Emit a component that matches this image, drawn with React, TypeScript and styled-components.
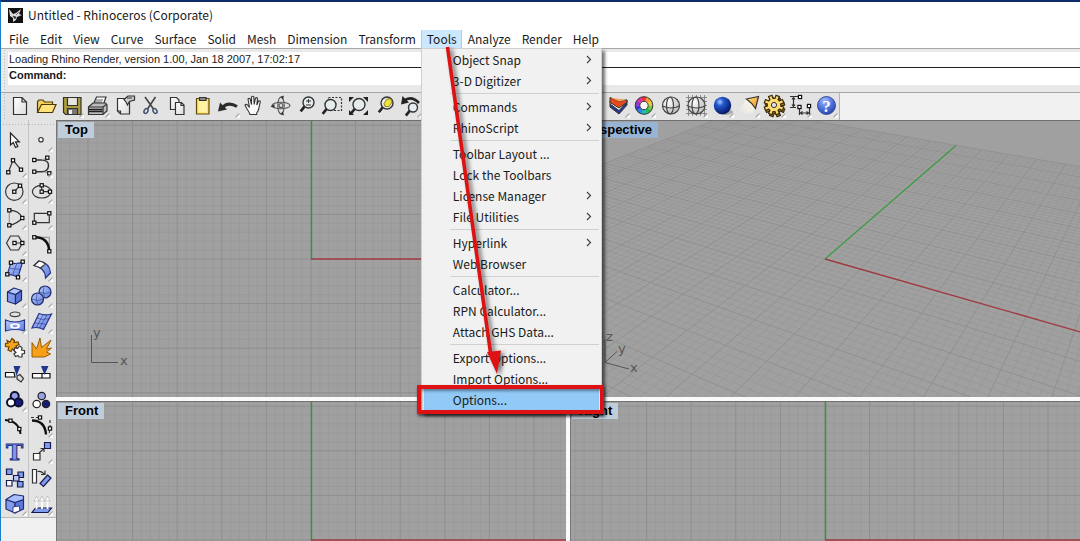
import React from "react";
import styled, { createGlobalStyle, css } from "styled-components";

const UI_FONT = '"Noto Sans CJK SC", "Noto Sans", sans-serif';
const CLASSIC_FONT = '"Liberation Sans", Arial, sans-serif';

const GlobalStyle = createGlobalStyle`
  *, *::before, *::after { box-sizing: border-box; }
  body { margin: 0; background: #f0f0f0; overflow: hidden; }
  button, input { font: inherit; color: inherit; }
`;

/* ---------- window frame ---------- */

const Window = styled.div`
  height: 100vh;
  display: flex;
  flex-direction: column;
  overflow: hidden;
  background: #f0f0f0;
  border-top: 2px solid #0c2c6c;
  border-left: 1px solid #1a80cc;
  color: #1a1a1a;
  font: 12px/18px ${UI_FONT};
`;

const TitleBar = styled.header`
  flex: none;
  display: flex;
  align-items: center;
  gap: 5px;
  height: 28px;
  padding: 0 0 2px 7px;
  background: #fff;
`;

const Title = styled.h1`
  margin: 0;
  font-size: 12px;
  font-weight: 400;
`;

const MenuBar = styled.nav`
  flex: none;
  display: flex;
  height: 18px;
  padding-left: 2px;
  background: #fff;
`;

const MenuSlot = styled.div`
  position: relative;
  display: flex;
`;

const MenuButton = styled.button<{ $open?: boolean }>`
  height: 18px;
  padding: 0 4px 0 5px;
  border: 1px solid transparent;
  border-width: 0 1px;
  background: none;
  line-height: 16px;
  ${(p) =>
    p.$open &&
    css`
      background: #cce8ff;
      border-color: #99d1ff;
    `}
`;

const DropDown = styled.div`
  position: absolute;
  z-index: 5;
  top: 18px;
  left: 0;
  width: 181px;
  padding: 0 2px 2px;
  background: #f1f1f1;
  border: 1px solid #cfcfcf;
  box-shadow: 3px 3px 3px rgba(0, 0, 0, 0.55);
`;

const DropItem = styled.button<{ $active?: boolean }>`
  display: flex;
  align-items: center;
  justify-content: space-between;
  width: 100%;
  height: 21px;
  padding: 0 7px 0 29px;
  border: 0;
  background: ${(p) => (p.$active ? "#91c9f7" : "none")};
  text-align: left;
  line-height: 20px;
  white-space: nowrap;
`;

const DropRule = styled.hr`
  height: 1px;
  margin: 2px 0 2px 26px;
  border: 0;
  background: #d0d0d0;
`;

const Highlight = styled.div`
  position: absolute;
  right: -3px;
  bottom: -2px;
  left: -5px;
  height: 29px;
  border: 4px solid #de1212;
  box-shadow: 1px 2px 3px rgba(0, 0, 0, 0.6), inset 1px 2px 3px rgba(0, 0, 0, 0.4);
  pointer-events: none;
`;

const Pointer = styled.svg`
  position: absolute;
  top: -5px;
  left: 15px;
  pointer-events: none;
  filter: drop-shadow(3px 2px 2px rgba(0, 0, 0, 0.55));
`;

/* ---------- command area ---------- */

const CommandArea = styled.section`
  flex: none;
  padding: 3px 0 7px 7px;
  border-top: 1px solid #a8a8a8;
  border-bottom: 1px solid #a5a5a5;
  background: radial-gradient(circle, #bdbdbd 1px, transparent 1px) 2px 0 / 3px 3px repeat-y, #e9e9e9;
  font-family: ${CLASSIC_FONT};
  font-size: 11px;
`;

const History = styled.output`
  display: block;
  height: 16px;
  padding-left: 1px;
  border-bottom: 1px solid #222;
  background: #fff;
  line-height: 15px;
`;

const Prompt = styled.div`
  display: flex;
  height: 17px;
  padding-left: 1px;
  background: #fff;
  line-height: 15px;

  label { font-weight: 700; }
  input { flex: 1; min-width: 0; padding: 0 4px; border: 0; outline: 0; background: none; }
`;

/* ---------- toolbars ---------- */

const MainTools = styled.div`
  flex: none;
  align-self: flex-start;
  display: flex;
  height: 27px;
  padding: 0 0 1px 6px;
  border-right: 1px solid #b4b4b4;
  background: radial-gradient(circle, #bdbdbd 1px, transparent 1px) 2px 0 / 3px 3px repeat-y, #e3e3e3;
`;

const Covered = styled.div`
  width: 182px;
`;

const ToolButton = styled.button`
  flex: none;
  display: block;
  width: 26px;
  height: 26px;
  padding: 0;
  border: 0;
  background: none;

  svg { display: block; }
`;

const Body = styled.main`
  flex: 1;
  display: flex;
  min-height: 0;
`;

const SideBars = styled.aside`
  flex: none;
  align-self: flex-start;
  display: flex;
  padding: 0 2px 0 1px;
  border-bottom: 1px solid #bababa;
  background: #e3e3e3;
`;

const SideColumn = styled.div`
  padding-top: 7px;
  background: radial-gradient(circle, #b5b5b5 1px, transparent 1px) 0 3px / 3px 3px repeat-x;

  & + & { box-shadow: inset 1px 0 #c4c4c4; }
`;

/* ---------- viewports ---------- */

const Viewports = styled.div`
  flex: 1;
  min-width: 0;
  display: grid;
  grid-template-columns: 1fr 1fr;
  grid-auto-rows: 277px;
  gap: 4px;
  background: #fafafa;
`;

const ViewFrame = styled.section`
  position: relative;
  overflow: hidden;
  border-top: 1px solid #6f6f6f;
  border-left: 1px solid #777;
  background: #a0a0a0;
`;

const Scene = styled.svg`
  display: block;
  width: 100%;
  height: 100%;
`;

const ViewLabel = styled.h2<{ $active?: boolean }>`
  position: absolute;
  top: 1px;
  left: 1px;
  margin: 0;
  padding: 0 6px 0 7px;
  background: ${(p) => (p.$active ? "#98b4d4" : "#bfccda")};
  color: #000;
  font: 700 13px/16px ${CLASSIC_FONT};
`;

const AxisMark = styled.svg`
  position: absolute;
  bottom: 24px;
  left: 32px;
  font: 13px "DejaVu Sans", sans-serif;
`;

/* ---------- icon drawing ---------- */

const INK = "#333";
const BLUE = "#7f9bea";

const More = () => (
  <g>
    <path d="M25 20v5h-5z" fill="#fff" />
    <path d="M20.500 24.500l4-4" stroke="#aaa" />
  </g>
);

const Icon = ({ more, children }: { more?: boolean; children: React.ReactNode }) => (
  <svg width="26" height="26" viewBox="0 0 26 26" fill="none" stroke={INK} strokeWidth="1.2" aria-hidden="true">
    {children}
    {more && <g stroke="none"><More /></g>}
  </svg>
);

const Nodes = ({ at }: { at: number[][] }) => (
  <g fill="#fff" stroke="#111" strokeWidth="1.2">
    {at.map(([x, y]) => (
      <rect key={`${x}-${y}`} x={x - 1.6} y={y - 1.6} width="3.200" height="3.200" />
    ))}
  </g>
);

const Lens = ({ x, y, r, fill = "#e6ebee" }: { x: number; y: number; r: number; fill?: string }) => (
  <g>
    <path d={`M${x - r * 0.7} ${y + r * 0.7}l-4 5`} stroke="#222" strokeWidth="2.6" />
    <circle cx={x} cy={y} r={r} fill={fill} stroke="#333" strokeWidth="1.4" />
  </g>
);

const GlobeLines = ({ x }: { x: number }) => (
  <g stroke="#444" strokeWidth="1.2">
    <circle cx={x} cy="12.500" r="8.500" fill="url(#pearl)" />
    <ellipse cx={x - 1} cy="12.500" rx="3.500" ry="8.500" />
    <path d={`M${x - 8.5} 13q8.500 4 17 0`} />
  </g>
);

const GearTeeth = ({ x, y, r, n, fill }: { x: number; y: number; r: number; n: number; fill: string }) => {
  const pts: string[] = [];
  for (let i = 0; i < n; i++) {
    const step = (Math.PI * 2) / n;
    [[-0.3, 0.68], [-0.24, 1], [0.24, 1], [0.3, 0.68]].forEach(([a, k]) => {
      const t = (i + 0.5 + a) * step;
      pts.push(`${(x + Math.cos(t) * r * k).toFixed(1)},${(y + Math.sin(t) * r * k).toFixed(1)}`);
    });
  }
  return <polygon points={pts.join(" ")} fill={fill} stroke="#3a2c0c" strokeWidth="1.2" strokeLinejoin="round" />;
};

const Defs = () => (
  <svg width="0" height="0" style={{ position: "absolute" }} aria-hidden="true">
    <defs>
      <radialGradient id="pearl" cx=".35" cy=".3" r=".8">
        <stop offset="0" stopColor="#fff" />
        <stop offset="1" stopColor="#b5b5b5" />
      </radialGradient>
      <radialGradient id="ball" cx=".35" cy=".3" r=".75">
        <stop offset="0" stopColor="#a9cbff" />
        <stop offset=".3" stopColor="#2459cf" />
        <stop offset="1" stopColor="#02145e" />
      </radialGradient>
      <radialGradient id="help" cx=".4" cy=".25" r=".8">
        <stop offset="0" stopColor="#a3baff" />
        <stop offset=".6" stopColor="#476ad8" />
        <stop offset="1" stopColor="#2a3f9c" />
      </radialGradient>
      <linearGradient id="sky" x1="0" y1="0" x2="1" y2="1">
        <stop offset="0" stopColor="#b9cbff" />
        <stop offset="1" stopColor="#5f7ddb" />
      </linearGradient>
      <linearGradient id="paper" x1="0" y1="0" x2="1" y2="1">
        <stop offset="0" stopColor="#fff" />
        <stop offset="1" stopColor="#ddd" />
      </linearGradient>
      <linearGradient id="glow" x1="0" y1="1" x2="1" y2="0">
        <stop offset="0" stopColor="#fff" stopOpacity="0" />
        <stop offset="1" stopColor="#fff7d8" />
      </linearGradient>
      <linearGradient id="amber" x1="0" y1="0" x2="1" y2="1">
        <stop offset="0" stopColor="#ffe68a" />
        <stop offset="1" stopColor="#f28a12" />
      </linearGradient>
    </defs>
  </svg>
);

type Tool = { name: string; more?: boolean; art: React.ReactNode };

const wheel = ["#e33", "#f93", "#ec3", "#7c3", "#2b5", "#2bb", "#28d", "#43d", "#93c", "#d3a"];

const fileTools: Tool[] = [
  { name: "New", art: <path d="M6.500 4.500h8.500l4.500 4.500v12.500h-13zM15 4.500v4.500h4.500" fill="url(#paper)" /> },
  {
    name: "Open",
    art: (
      <g stroke="#4a3a08">
        <path d="M4.500 19.500v-11l1.500-1.500h4l1.500 2h8v3" fill="#f4cf5c" />
        <path d="M4.500 19.500l4-8h14.500l-3.500 8z" fill="#ffe27a" />
      </g>
    ),
  },
  {
    name: "Save",
    more: true,
    art: (
      <g>
        <path d="M4.500 4.500h17.500v17h-15.500l-2-2z" fill="#a99c3e" />
        <path d="M8.500 4.500h10v8h-10z" fill="#e6e6e0" />
        <path d="M8.500 15.500h10v6h-10z" fill="#777" />
        <path d="M10 17h3v4h-3z" fill="#eee" stroke="none" />
      </g>
    ),
  },
  {
    name: "Print",
    more: true,
    art: (
      <g>
        <path d="M8.500 11l3-7h9.500l-2.500 7z" fill="#fff" />
        <path d="M11 7h7M10 9h7" strokeWidth=".8" />
        <path d="M3.500 14l4.500-4h12.500l1.500 2v6l-4 3.500h-14.500z" fill="#bcbcbc" />
        <path d="M3.500 14h14.500l4-3M18 14v7" />
        <path d="M4 16.500h13.500M4 18.500h13.500" strokeWidth="1.400" stroke="#222" />
      </g>
    ),
  },
  {
    name: "Document properties",
    art: (
      <g>
        <path d="M6.500 5.500h12v15.500h-9l-3-3z" fill="url(#paper)" />
        <path d="M6.500 18h3v3" />
        <path d="M13 6.500l4-3.500h6.500v4l-5 1.500-2 3.500-1.500-3z" fill="#cfcfcf" />
        <path d="M16 5h5" strokeWidth="1" />
      </g>
    ),
  },
  {
    name: "Cut",
    art: (
      <g>
        <path d="M8 4l8.500 12M18.500 4l-8 12" stroke="#444" strokeWidth="1.600" />
        <ellipse cx="9" cy="18" rx="1.800" ry="2.600" stroke="#3a4a70" strokeWidth="1.400" transform="rotate(30 9 18)" />
        <ellipse cx="18" cy="18" rx="1.800" ry="2.600" stroke="#3a4a70" strokeWidth="1.400" transform="rotate(-30 18 18)" />
      </g>
    ),
  },
  {
    name: "Copy",
    art: (
      <g fill="url(#paper)">
        <path d="M7.500 4.500h6l2.500 2.500v9.500h-8.500z" />
        <path d="M12.500 9.500h6l2.500 2.500v9.500h-8.500zM18 9.500v3h3" />
      </g>
    ),
  },
  {
    name: "Paste",
    art: (
      <g>
        <path d="M7.500 5.500h12.500v15.500h-12.500z" fill="#ffe05a" stroke="#5c4c10" />
        <path d="M9.500 7.500h8.500v12h-8.500z" fill="#fff2a6" stroke="none" />
        <path d="M10.500 4.500h6.500v3h-6.500z" fill="#888" />
      </g>
    ),
  },
  {
    name: "Undo",
    more: true,
    art: (
      <g>
        <path d="M7 15q6-7 15-1.500" strokeWidth="3" stroke="#2b2b2b" />
        <path d="M3 18.500l2-9 7 7z" fill="#2b2b2b" stroke="none" />
      </g>
    ),
  },
  {
    name: "Pan",
    art: (
      <path
        d="M9 21.500q-1-3-3-5.500l-2-4q1-1.500 2.500 0l2 2.500-1.500-8.500q1.200-1.500 2.200 0l1.300 5.500v-7.500q1.200-1.500 2.300 0l.4 7.500 1.300-6.500q1.500-1 2 .5l-.7 6.500 1.700-4q1.500-.7 1.800.6l-1.600 7.400q-.5 2-2 4v1.500z"
        fill="#fafafa"
        strokeWidth="1.100"
      />
    ),
  },
  {
    name: "Rotate view",
    art: (
      <g strokeWidth="1.100" stroke="#555">
        <ellipse cx="14" cy="12.500" rx="9" ry="3.200" />
        <ellipse cx="14" cy="12.500" rx="3.200" ry="8.500" />
        <circle cx="14" cy="12.500" r="2" fill="#ddd" />
        <path d="M17 2.500l-4 1.500 3 2.500zM17 22.500l-4-1.500 3-2.500zM3.500 13.500l4-2.500v4z" fill="#333" stroke="none" />
      </g>
    ),
  },
  {
    name: "Zoom dynamic",
    art: (
      <g>
        <Lens x={15.5} y={9.5} r={5.5} />
        <path d="M13 8h5M15.500 6v4M13 12h5" strokeWidth="1" />
      </g>
    ),
  },
  {
    name: "Zoom window",
    art: (
      <g>
        <path d="M9.500 4.500h13v13h-13z" strokeDasharray="2 1.500" />
        <Lens x={11.5} y={12} r={5.5} />
      </g>
    ),
  },
  {
    name: "Zoom extents",
    art: (
      <g>
        <Lens x={14} y={11.5} r={6} />
        <path d="M4 4h5l-5 5zM23 4h-5l5 5zM23 22h-5l5-5zM4 22h5l-5-5z" fill="#222" stroke="none" />
      </g>
    ),
  },
  {
    name: "Zoom selected",
    art: (
      <g>
        <Lens x={16} y={10} r={6} />
        <path d="M13 10.500l3-4.500h4l1 3-3 4.500h-4z" fill="#f4e23c" stroke="#867a14" strokeWidth=".9" />
      </g>
    ),
  },
  {
    name: "Undo view",
    more: true,
    art: (
      <g>
        <path d="M7 8q7-6 15 2" strokeWidth="2.600" stroke="#222" />
        <path d="M4 11.500l1.500-8.500 6.500 6.500z" fill="#222" stroke="none" />
        <Lens x={16} y={14.5} r={4.5} />
      </g>
    ),
  },
];

const renderTools: Tool[] = [
  {
    name: "Layers",
    more: true,
    art: (
      <g strokeWidth="1">
        <path d="M5 14l9 7 8-9v-3l-17 2z" fill="#27378f" />
        <path d="M5 11l9 6.500 8-8.500v-2l-17 1z" fill="#fff" />
        <path d="M5 4.500l9 4 8-1.500v2l-8 6-9-5.500z" fill="#e8481c" />
        <path d="M5 4.500l9 4 8-1.500-7-1z" fill="#ffa04c" stroke="none" />
      </g>
    ),
  },
  {
    name: "Object colour",
    more: true,
    art: (
      <g>
        {wheel.map((c, i) => (
          <circle key={c} cx="13" cy="12.500" r="6.500" stroke={c} strokeWidth="4.600" pathLength="10" strokeDasharray="1.050 8.950" strokeDashoffset={-i - 7} />
        ))}
        <circle cx="13" cy="12.500" r="8.800" strokeWidth="1" />
        <circle cx="13" cy="12.500" r="4.200" strokeWidth="1" fill="#f5f5f5" />
      </g>
    ),
  },
  { name: "Wireframe", art: <GlobeLines x={14} /> },
  {
    name: "Shaded grid",
    more: true,
    art: (
      <g>
        <path d="M5.500 2v21M9.500 2v21M13.500 2v21M17.500 2v21M21.500 2v21M3 4.500h21M3 8.500h21M3 12.500h21M3 16.500h21M3 20.500h21" strokeWidth=".8" stroke="#777" />
        <GlobeLines x={13.5} />
      </g>
    ),
  },
  {
    name: "Render",
    more: true,
    art: (
      <g stroke="none">
        <ellipse cx="16" cy="19" rx="8" ry="3" fill="#aaa" />
        <circle cx="13.500" cy="12.500" r="8.700" fill="url(#ball)" />
      </g>
    ),
  },
  {
    name: "Spotlight",
    more: true,
    art: (
      <g>
        <path d="M12 5l-8 12q6 6 13 3l3-6z" fill="url(#glow)" stroke="none" />
        <path d="M11.500 6l12-2.500-3 12q-4-6-9-9.500z" fill="url(#amber)" />
      </g>
    ),
  },
  {
    name: "Options",
    more: true,
    art: (
      <g>
        <GearTeeth x={14} y={14} r={10} n={8} fill="#a5801c" />
        <GearTeeth x={13} y={12} r={10} n={8} fill="#ffdc70" />
        <circle cx="13" cy="12" r="2.600" fill="#e3e3e3" strokeWidth="1" />
      </g>
    ),
  },
  {
    name: "Dimensions",
    more: true,
    art: (
      <g strokeWidth="1.200">
        <path d="M3 3.500h11M3 14.500h6M6.500 5v8M5 6.500l1.500-2 1.500 2M5 11.500l1.500 2 1.500-2M12.500 14v8M22.500 13v9M14 20h7M15.500 18.500l-2 1.500 2 1.500M19.500 18.500l2 1.500-2 1.500" />
        <Nodes at={[[13, 4], [12.5, 14], [22, 13]]} />
      </g>
    ),
  },
  {
    name: "Help",
    more: true,
    art: (
      <g>
        <circle cx="13.500" cy="12.500" r="9" fill="url(#help)" stroke="#3a4f9e" strokeWidth="1" />
        <text x="13.500" y="18.500" textAnchor="middle" fill="#fff" stroke="none" fontFamily="Liberation Serif, serif" fontSize="17" fontWeight="700">?</text>
      </g>
    ),
  },
];

const leftTools: Tool[] = [
  { name: "Select", art: <path d="M8.500 6v12l2.800-2.500 2.200 5 2.300-1-2.300-4.700h3.800z" fill="#fff" stroke="#222" /> },
  { name: "Polyline", more: true, art: <g><path d="M6.300 19.300L11 7.300l8 9.400" /><Nodes at={[[6.3, 19.3], [11, 7.3], [19, 16.7]]} /></g> },
  { name: "Circle", more: true, art: <g><circle cx="12.300" cy="12.700" r="8.700" /><path d="M12.300 12.700l5.700-6" /><Nodes at={[[12.3, 12.7], [18, 6.7]]} /></g> },
  { name: "Arc", more: true, art: <g><path d="M7.300 5.300Q17 5 20.300 13Q15 19 7.300 20.300" /><path d="M7.300 5.300v15" stroke="#999" /><Nodes at={[[7.3, 5.3], [20.3, 13], [7.3, 20.3]]} /></g> },
  { name: "Polygon", more: true, art: <g><path d="M4.500 12l4-7h8l4 7-4 7h-8zM12.500 12h8" /><Nodes at={[[12.5, 12], [20.3, 12]]} /></g> },
  {
    name: "Surface",
    more: true,
    art: (
      <g>
        <path d="M9 5.700q6 2 11.700-1l-4.700 15.600q-5-3-10.700-3z" fill="url(#sky)" stroke="#26348a" />
        <path d="M15 6l-4.500 12M7 11.500q6 0 11.500 1" stroke="#4659a8" strokeWidth=".9" />
        <Nodes at={[[9, 5.7], [20.7, 4.7], [16, 20.3], [5.3, 17.3]]} />
      </g>
    ),
  },
  {
    name: "Box",
    more: true,
    art: (
      <g stroke="#1f2c6e" strokeLinejoin="round">
        <path d="M5.500 9l8 2.500v9.500l-8-2.500z" fill={BLUE} />
        <path d="M13.500 11.500l6-4v9.500l-6 4z" fill="#5a74d4" />
        <path d="M5.500 9l6.500-4 7.500 2.500-6 4z" fill="#b6c7ff" />
      </g>
    ),
  },
  {
    name: "Project",
    more: true,
    art: (
      <g>
        <ellipse cx="13" cy="5.300" rx="5" ry="2.300" stroke="#444" />
        <path d="M3.500 11q9.500 4 19 0v11q-9.500-3-19 0z" fill="url(#sky)" stroke="#26348a" />
        <ellipse cx="13" cy="17" rx="5" ry="2.800" fill="#fff" stroke="none" />
        <ellipse cx="13" cy="17" rx="2.500" ry="1.200" fill={BLUE} stroke="none" />
      </g>
    ),
  },
  {
    name: "Join",
    art: (
      <g>
        <path d="M5 5.500l3 1.500 2-3.500 2.500 2-.5 2 4-.5 1 2.500-3 1.500 1.500 3-3 1.500-2-1.500-1.500 2.500-3-1.500 1-3-3.500-.5 0-3 2.500-.5z" fill="#f9a51a" stroke="#6b4300" />
        <path d="M13 12.500l2.500 1 2-2.500 2.500 1.500-.5 2.500 3 .5 0 3-2.500.5 0 3-3 0-1-1.500-2.500 1-1.500-2.500 2-1.500-2-2z" fill="#fff" />
      </g>
    ),
  },
  {
    name: "Trim",
    art: (
      <g>
        <path d="M3.500 11.500h8.500l1 4.500h-9.500z" fill="#fff" stroke="#111" />
        <path d="M15 15l3-1.500 3.500 4-2.500 3.500-4-3z" fill="#ddd" />
        <path d="M11.500 5h7l-4 10z" fill="#22368f" stroke="none" />
      </g>
    ),
  },
  {
    name: "Group",
    more: true,
    art: (
      <g stroke="#0d1030" strokeWidth="2">
        <circle cx="12.700" cy="9" r="4" fill="#9aa0e8" />
        <circle cx="16.500" cy="15.500" r="4" fill="#171c78" />
        <circle cx="9" cy="15.500" r="4" fill="#fff" />
      </g>
    ),
  },
  { name: "Edit points", art: <g><path d="M3 7q14 1 15.500 14" strokeWidth="2" stroke="#111" /><Nodes at={[[8.5, 7.7], [17.3, 16]]} /></g> },
  {
    name: "Text",
    art: (
      <text x="12.500" y="20.500" textAnchor="middle" fill={BLUE} stroke="#1f2f85" strokeWidth="1" fontFamily="DejaVu Serif, serif" fontSize="23" fontWeight="700">T</text>
    ),
  },
  {
    name: "Move",
    art: (
      <g stroke="#15194d" strokeWidth="1.200">
        <path d="M4.500 4h5.500v5.500h-5.500z" fill={BLUE} />
        <path d="M16 7h5.500v5.500h-5.500z" fill={BLUE} />
        <path d="M11.500 10.500h5.500v5.500h-5.500z" fill="#b6c7ff" />
        <path d="M4.500 15.500h5.500v5.500h-5.500z" fill="#fff" />
        <path d="M15.500 16.500h5.500v5.500h-5.500z" fill={BLUE} />
      </g>
    ),
  },
  {
    name: "Cap",
    more: true,
    art: (
      <g stroke="#1f2c6e" strokeLinejoin="round">
        <path d="M4 8.500l9 3v10.500l-9-4z" fill={BLUE} />
        <path d="M13 11.500l8.500-3v9.500l-8.500 4z" fill="#5c78dc" />
        <path d="M4 8.500l8-5 9.500 1.500v3.500l-8.500 3z" fill="#a9beff" />
        <path d="M11 16l6.500-1v5l-6.500 2z" fill="#fff" strokeWidth=".8" />
      </g>
    ),
  },
];

const rightTools: Tool[] = [
  { name: "Point", more: true, art: <circle cx="13" cy="12.700" r="2.200" fill="#fff" /> },
  { name: "Curve", more: true, art: <g><path d="M6.300 7H13Q21 7 20.500 13T13 18.700H6.300" strokeWidth="1.500" /><path d="M14 7l5-2M16 19l5 1" stroke="#999" /><Nodes at={[[6.3, 7], [19.3, 4.7], [6.3, 18.7], [21.3, 20.3]]} /></g> },
  { name: "Ellipse", more: true, art: <g><ellipse cx="13.700" cy="12.700" rx="9.300" ry="6.300" /><path d="M13.700 6.300v6.400h8" /><Nodes at={[[13.7, 6.3], [13.7, 12.7], [22, 12.7]]} /></g> },
  { name: "Rectangle", more: true, art: <g><path d="M6.300 8.300h15v9.400h-15z" /><Nodes at={[[6.3, 17.7], [21.3, 8.3]]} /></g> },
  { name: "Fillet", art: <g><path d="M6.300 6.300h15v14" stroke="#999" /><path d="M6.300 6.300q14-.5 15 14" strokeWidth="2.400" stroke="#111" /><Nodes at={[[6.3, 6.3], [21.3, 20.3]]} /></g> },
  {
    name: "Surface edit",
    more: true,
    art: (
      <g>
        <path d="M6 8.500l5-4.500q11 2 11.500 12l-5 5q0-10-11.500-12.500z" fill="url(#sky)" stroke="#26348a" />
        <path d="M6 8.500l5-4.500q4 .5 6.500 3l-5 4q-2.500-1.500-6.500-2.500z" fill="#fff" />
      </g>
    ),
  },
  {
    name: "Boolean",
    more: true,
    art: (
      <g stroke="#1f2c6e">
        <circle cx="17" cy="9" r="6" fill="url(#sky)" />
        <circle cx="9.500" cy="16" r="6" fill="url(#sky)" />
        <path d="M11 9q6 3 12 0M16 3q-2 6 1 12M3.500 16q6 3 12 0M9 10q-2 6 1 12" strokeWidth=".5" />
      </g>
    ),
  },
  {
    name: "Mesh",
    more: true,
    art: (
      <g stroke="#26348a">
        <path d="M11 4.500q6 2.500 12.500.5l-8 15.500q-5-3-11.500-1.500z" fill="url(#sky)" />
        <path d="M8.500 9q6 2.500 12.500.7M6.300 14q6 0 12 1.500M15 6l-7 13M19 6l-8 13.500" strokeWidth=".6" />
      </g>
    ),
  },
  {
    name: "Explode",
    art: <path d="M4 22v-14.500l4.500 6.500 3.500-11 1.500 9.500 9.500-7.500-4.500 9 5-1-5 4 4 2-6 3z" fill="#f9a01b" stroke="#8a5200" strokeWidth=".9" />,
  },
  { name: "Split", art: <g><path d="M4.500 12.500h17.500v4.500h-17.500zM14 12.500v4.500" fill="#fff" stroke="#111" /><path d="M13 5h7.500l-4 9z" fill="#22368f" stroke="none" /></g> },
  {
    name: "Ungroup",
    art: (
      <g stroke="#222" strokeWidth="1.200">
        <circle cx="13.700" cy="9" r="3.700" fill="#9aa0e8" />
        <circle cx="8.700" cy="17" r="3.700" fill="#fff" />
        <circle cx="18" cy="17" r="3.700" fill="#171c78" />
      </g>
    ),
  },
  { name: "Control points", more: true, art: <g><path d="M4 7.500q13 0 14 14" strokeWidth="2.400" stroke="#111" /><path d="M3 4.500h8M22 7v8l-1 7" strokeDasharray="3 2" /><Nodes at={[[12, 4.5], [22, 15.5]]} /></g> },
  {
    name: "Scale",
    more: true,
    art: (
      <g>
        <path d="M16.500 3.500h6v6h-6z" fill={BLUE} stroke="#15194d" />
        <path d="M5.500 14.500h6.500v6.500h-6.500z" fill="#fff" />
        <path d="M11 14l4.500-4M12.500 9.500h3.500v3.500" />
      </g>
    ),
  },
  {
    name: "Orient",
    art: (
      <g>
        <path d="M4.500 4.500h4v13.500h-4z" fill="#fff" />
        <path d="M19.500 10l3.500 3-7.500 8.500-3.500-3z" fill={BLUE} stroke="#15194d" />
        <path d="M9.500 6.500q4-1 7 3M17 5.500v4h-4" />
      </g>
    ),
  },
  {
    name: "Loft",
    more: true,
    art: (
      <g>
        <path d="M7.500 17h16l-3.500 4.500h-16z" fill={BLUE} stroke="#15194d" />
        <path d="M8.500 18v-9M14 18v-9M19.500 18v-9" stroke="#fff" strokeWidth="1.800" />
        <path d="M6 10l2.500-5 2.500 5zM11.500 10l2.500-5 2.500 5zM17 10l2.500-5 2.500 5z" fill="#fff" stroke="#aaa" strokeWidth=".6" />
      </g>
    ),
  },
];

const Tools = ({ items }: { items: Tool[] }) => (
  <>
    {items.map((t) => (
      <ToolButton key={t.name} type="button" aria-label={t.name}>
        <Icon more={t.more}>{t.art}</Icon>
      </ToolButton>
    ))}
  </>
);

/* ---------- viewport scenes ---------- */

const VIEW_BOX = "-254 -138 509 276";
const MAJOR = 44.6;

const flatPath = (step: number, skip: number) => {
  let d = "";
  for (let i = -60; i <= 60; i++) {
    if (skip && i % skip === 0) continue;
    const p = (i * step).toFixed(1);
    d += `M${p} -400V400M-600 ${p}H600`;
  }
  return d;
};

const FLAT_MINOR = flatPath(MAJOR / 5, 5);
const FLAT_MAJOR = flatPath(MAJOR, 0);

/* Two vanishing points on the horizon drive the perspective floor. */
const project = (u: number, v: number) => {
  const a = -0.286 * u;
  const b = 0.511 * v;
  const w = 1 + a + b;
  return `${((a * -1204.5 + b * 387.5) / w).toFixed(1)} ${((a * -344 + b * -336) / w).toFixed(1)}`;
};

const floorPath = (major: boolean) => {
  let d = "";
  for (let i = -50; i <= 50; i++) {
    if ((i % 5 === 0) !== major) continue;
    const k = i / 50;
    d += `M${project(-1, k)}L${project(1, k)}M${project(k, -1)}L${project(k, 1)}`;
  }
  return d;
};

const FLOOR_MINOR = floorPath(false);
const FLOOR_MAJOR = floorPath(true);

const FlatScene = () => (
  <Scene viewBox={VIEW_BOX} preserveAspectRatio="xMidYMid slice" fill="none" aria-hidden="true">
    <path d={FLAT_MINOR} stroke="#999" />
    <path d={FLAT_MAJOR} stroke="#8e8e8e" />
    <path d="M.5 0V-400" stroke="#2f9a34" strokeWidth="1.400" />
    <path d="M0 0H600" stroke="#a03a40" strokeWidth="1.400" />
  </Scene>
);

const FloorScene = () => (
  <Scene viewBox={VIEW_BOX} preserveAspectRatio="xMidYMid slice" fill="none" aria-hidden="true">
    <path d={FLOOR_MINOR} stroke="#939393" strokeWidth=".5" />
    <path d={FLOOR_MAJOR} stroke="#8d8d8d" strokeWidth=".8" />
    <path d={`M0 0L${project(0, 1)}`} stroke="#3d9c42" strokeWidth="1.300" />
    <path d={`M0 0L${project(1, 0)}`} stroke="#a03a40" strokeWidth="1.300" />
  </Scene>
);

const FlatAxes = () => (
  <AxisMark width="44" height="52" viewBox="0 0 44 52" fill="#555" aria-hidden="true">
    <path d="M2.500 14v27.500h26.500" stroke="#555" fill="none" />
    <text x="31" y="44">x</text>
    <text x="4" y="16">y</text>
  </AxisMark>
);

const FloorAxes = () => (
  <AxisMark width="44" height="52" viewBox="0 0 44 52" fill="#555" aria-hidden="true">
    <path d="M2 18v23.500l12-11M2 41.500l24 6.500" stroke="#555" fill="none" />
    <text x="3" y="20">z</text>
    <text x="15" y="32">y</text>
    <text x="27" y="51">x</text>
  </AxisMark>
);

type View = { name: string; active?: boolean; scene: React.ReactNode; axes?: React.ReactNode };

const views: View[] = [
  { name: "Top", scene: <FlatScene />, axes: <FlatAxes /> },
  { name: "Perspective", active: true, scene: <FloorScene />, axes: <FloorAxes /> },
  { name: "Front", scene: <FlatScene /> },
  { name: "Right", scene: <FlatScene /> },
];

/* ---------- menus ---------- */

type Entry = { text: string; sub?: boolean; active?: boolean };

const toolsMenu: Entry[][] = [
  [{ text: "Object Snap", sub: true }, { text: "3-D Digitizer", sub: true }],
  [{ text: "Commands", sub: true }, { text: "RhinoScript", sub: true }],
  [
    { text: "Toolbar Layout ..." },
    { text: "Lock the Toolbars" },
    { text: "License Manager", sub: true },
    { text: "File Utilities", sub: true },
  ],
  [{ text: "Hyperlink", sub: true }, { text: "Web Browser" }],
  [{ text: "Calculator..." }, { text: "RPN Calculator..." }, { text: "Attach GHS Data..." }],
  [{ text: "Export Options..." }, { text: "Import Options..." }, { text: "Options...", active: true }],
];

const menus = ["File", "Edit", "View", "Curve", "Surface", "Solid", "Mesh", "Dimension", "Transform", "Tools", "Analyze", "Render", "Help"];

const ToolsMenu = () => (
  <DropDown role="menu">
    {toolsMenu.map((group, i) => (
      <React.Fragment key={group[0].text}>
        {i > 0 && <DropRule />}
        {group.map((e) => (
          <DropItem key={e.text} type="button" role="menuitem" $active={e.active}>
            {e.text}
            {e.sub && (
              <svg width="6" height="9" viewBox="0 0 6 9" fill="none" stroke="#444" strokeWidth="1.200" aria-hidden="true">
                <path d="M1 1l3.500 3.500L1 8" />
              </svg>
            )}
          </DropItem>
        ))}
      </React.Fragment>
    ))}
    <Highlight />
    <Pointer width="72" height="336" viewBox="0 0 72 336" aria-hidden="true">
      <path d="M10.500 3L54 312" stroke="#de1212" strokeWidth="3.600" fill="none" />
      <path d="M60 330L50 308l14-1.500z" fill="#de1212" />
    </Pointer>
  </DropDown>
);

export default function App() {
  return (
    <>
      <GlobalStyle />
      <Defs />
      <Window>
        <TitleBar>
          <svg width="15" height="15" viewBox="0 0 15 15" aria-hidden="true">
            <path d="M0 0h15v15H0z" fill="#111" />
            <path d="M1 1l4 5 3-1 5-4-2 5 3 1-5 2-1 3-3 2 0-4-3-2z" fill="#dcdcdc" />
            <path d="M5 8l3 1-1 2zM8 7l3-3" fill="#222" stroke="#333" strokeWidth=".6" />
          </svg>
          <Title>Untitled - Rhinoceros (Corporate)</Title>
        </TitleBar>

        <MenuBar>
          {menus.map((m) => (
            <MenuSlot key={m}>
              <MenuButton type="button" $open={m === "Tools"}>{m}</MenuButton>
              {m === "Tools" && <ToolsMenu />}
            </MenuSlot>
          ))}
        </MenuBar>

        <CommandArea>
          <History>Loading Rhino Render, version 1.00, Jan 18 2007, 17:02:17</History>
          <Prompt>
            <label htmlFor="command">Command:</label>
            <input id="command" type="text" autoComplete="off" />
          </Prompt>
        </CommandArea>

        <MainTools role="toolbar">
          <Tools items={fileTools} />
          <Covered />
          <Tools items={renderTools} />
        </MainTools>

        <Body>
          <SideBars>
            <SideColumn><Tools items={leftTools} /></SideColumn>
            <SideColumn><Tools items={rightTools} /></SideColumn>
          </SideBars>
          <Viewports>
            {views.map((v) => (
              <ViewFrame key={v.name}>
                {v.scene}
                <ViewLabel $active={v.active}>{v.name}</ViewLabel>
                {v.axes}
              </ViewFrame>
            ))}
          </Viewports>
        </Body>
      </Window>
    </>
  );
}
